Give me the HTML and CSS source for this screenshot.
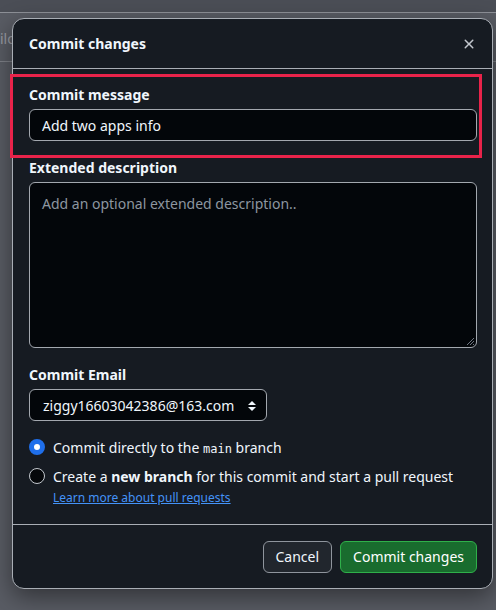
FILE: index.html
```html
<!DOCTYPE html>
<html lang="en">
<head>
<meta charset="utf-8">
<title>Commit changes</title>
<link rel="stylesheet" href="styles.css">
</head>
<body>
<div class="page">
  <div class="page-top"></div>
  <div class="page-row"><span class="page-text">ilo</span></div>
</div>

<div class="dialog" role="dialog" aria-label="Commit changes">
  <div class="dialog-header">
    <h1 class="dialog-title">Commit changes</h1>
    <button class="close-btn" aria-label="Close">
      <svg width="16" height="16" viewBox="0 0 16 16" fill="currentColor"><path d="M3.72 3.72a.75.75 0 0 1 1.06 0L8 6.94l3.22-3.22a.749.749 0 0 1 1.275.326.749.749 0 0 1-.215.734L9.06 8l3.22 3.22a.749.749 0 0 1-.326 1.275.749.749 0 0 1-.734-.215L8 9.060l-3.22 3.22a.751.751 0 0 1-1.042-.018.751.751 0 0 1-.018-1.042L6.940 8 3.72 4.78a.75.75 0 0 1 0-1.06Z"/></svg>
    </button>
  </div>
  <div class="dialog-body">
    <div class="highlight"></div>
    <div class="field">
      <label class="label">Commit message</label>
      <div class="input">Add two apps info</div>
    </div>
    <div class="field">
      <label class="label">Extended description</label>
      <div class="textarea">
        <span class="placeholder">Add an optional extended description..</span>
        <svg class="resize" width="10" height="10" viewBox="0 0 10 10"><path d="M9 2 2 9M9 5 5 9M9 8 8 9" stroke="#6e7681" stroke-width="1"/></svg>
      </div>
    </div>
    <div class="field">
      <label class="label">Commit Email</label>
      <div class="select">
        <span>ziggy16603042386@163.com</span>
        <svg class="select-arrows" width="8" height="12" viewBox="0 0 8 12" fill="#f0f6fc"><path d="M4 1 8 5H0Z"/><path d="M4 11 0 7h8Z"/></svg>
      </div>
    </div>
    <div class="radios">
      <div class="radio-row">
        <span class="radio checked"></span>
        <span class="radio-text">Commit directly to the <code>main</code> branch</span>
      </div>
      <div class="radio-row second">
        <span class="radio"></span>
        <span class="radio-text">Create a <b>new branch</b> for this commit and start a pull request</span>
      </div>
      <a class="learn" href="#">Learn more about pull requests</a>
    </div>
  </div>
  <div class="dialog-footer">
    <button class="btn">Cancel</button>
    <button class="btn primary">Commit changes</button>
  </div>
</div>
</body>
</html>
```

FILE: styles.css
```css
* { box-sizing: border-box; }
html, body {
  margin: 0;
  padding: 0;
  width: 496px;
  height: 610px;
  overflow: hidden;
}
body {
  background: #595c64;
  font-family: "Noto Sans", "Open Sans", sans-serif;
  font-size: 14px;
  color: #f0f6fc;
  position: relative;
}
.page-top {
  height: 13px;
  background: #4b4e56;
  border-bottom: 1px solid #8e9198;
}
.page-row {
  height: 49px;
  border-bottom: 1px solid #7e8188;
  display: flex;
  align-items: center;
}
.page-text {
  margin-left: 0;
  color: #9a9da3;
  font-size: 14px;
  margin-top: 2px;
}

.dialog {
  position: absolute;
  left: 12px;
  top: 18px;
  width: 481px;
  height: 571px;
  background: #161b22;
  border: 1px solid #a9aeb5;
  border-radius: 12px;
  box-shadow: 0 8px 24px rgba(0,0,0,0.45);
  display: flex;
  flex-direction: column;
}
.dialog-header {
  height: 50px;
  display: flex;
  align-items: center;
  justify-content: space-between;
  padding: 0 15px 0 16px;
  border-bottom: 1px solid #a9aeb5;
}
.dialog-title {
  margin: 0;
  font-size: 14px;
  font-weight: 700;
  color: #f0f6fc;
}
.close-btn {
  background: none;
  border: 0;
  padding: 0;
  color: #c3c8ce;
  display: flex;
  width: 16px;
  height: 16px;
}
.dialog-body {
  position: relative;
  flex: 1;
  padding: 15px 15px 0 16px;
}
.highlight {
  position: absolute;
  left: -3px;
  top: 5px;
  width: 472px;
  height: 84px;
  border: 3px solid #e8234a;
  pointer-events: none;
}
.field { margin-bottom: 16px; }
.label {
  display: block;
  font-weight: 700;
  font-size: 14px;
  line-height: 21px;
  margin-bottom: 4px;
  color: #f0f6fc;
}
.input, .textarea, .select {
  background: #03060a;
  border: 1px solid #a3a8af;
  border-radius: 6px;
  color: #f0f6fc;
}
.input {
  height: 32px;
  width: 448px;
  padding: 0 12px;
  display: flex;
  align-items: center;
}
.textarea {
  position: relative;
  height: 166px;
  width: 448px;
  padding: 11px 12px;
}
.placeholder { color: #8d96a0; }
.resize {
  position: absolute;
  right: 1px;
  bottom: 1px;
}
.select {
  height: 32px;
  width: 238px;
  padding: 0 10px 0 13px;
  display: flex;
  align-items: center;
  justify-content: space-between;
}
.select-arrows { margin-top: 1px; }
.radios {
  display: flex;
  flex-direction: column;
}
.radio-row {
  display: flex;
  align-items: center;
  height: 20px;
  gap: 8px;
  color: #f0f6fc;
}
.radio-row.second { margin-top: 9px; }
.radio {
  width: 16px;
  height: 16px;
  border-radius: 50%;
  border: 1px solid #c3c8ce;
  background: #05070a;
  flex: none;
}
.radio.checked {
  border: 5px solid #1f6feb;
  background: #ffffff;
}
.radio-text code {
  font-family: "DejaVu Sans Mono", "Liberation Mono", monospace;
  font-size: 12px;
}
.radio-text b { font-weight: 700; }
.learn {
  margin-left: 24px;
  margin-top: 3px;
  font-size: 12px;
  line-height: 18px;
  color: #4493f8;
  text-decoration: underline;
}
.dialog-footer {
  height: 64px;
  border-top: 1px solid #a9aeb5;
  display: flex;
  justify-content: flex-end;
  align-items: center;
  gap: 8px;
  padding: 0 15px;
}
.btn {
  height: 32px;
  padding: 0 12px;
  border-radius: 6px;
  font-family: "Noto Sans", "Open Sans", sans-serif;
  font-size: 14px;
  font-weight: 400;
  background: #21262d;
  border: 1px solid #8f959d;
  color: #f0f6fc;
  cursor: pointer;
}
.btn.primary {
  background: #196c2e;
  border-color: #2fb04a;
  color: #ffffff;
}
```
